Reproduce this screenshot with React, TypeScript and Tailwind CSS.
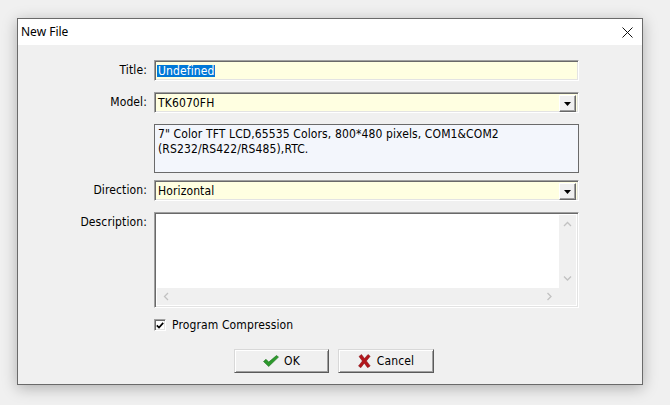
import React from "react";

const uiFont =
  "font-['DejaVu_Sans_Condensed','Liberation_Sans',sans-serif] text-[12px] tracking-[0.12px] text-black [font-variant-ligatures:none]";
const sunken =
  "border border-t-[#a0a0a0] border-l-[#a0a0a0] border-b-white border-r-white shadow-[inset_1px_1px_0_#696969,inset_-1px_-1px_0_#e3e3e3]";
const raised =
  "border border-t-[#d8d8d8] border-l-[#d8d8d8] border-b-[#5a5a5a] border-r-[#5a5a5a] bg-[#f0f0f0] shadow-[inset_1px_1px_0_#fff,inset_-1px_-1px_0_#a0a0a0]";

function DropButton() {
  return (
    <div className="absolute right-[2px] top-[2px] flex h-[17px] w-[17px] items-center justify-center border border-t-white border-l-white border-b-[#696969] border-r-[#696969] bg-[#f0f0f0] shadow-[inset_-1px_-1px_0_#a0a0a0]">
      <svg width="7" height="4" viewBox="0 0 7 4">
        <path d="M0 0h7L3.5 4z" fill="#000" />
      </svg>
    </div>
  );
}

function Chevron({ dir }: { dir: "up" | "down" | "left" | "right" }) {
  const d = {
    up: "M1 5l3.5-3.5L8 5",
    down: "M1 1.5l3.5 3.5L8 1.5",
    left: "M5 1L1.5 4.5 5 8",
    right: "M1.5 1L5 4.5 1.5 8",
  }[dir];
  const vertical = dir === "up" || dir === "down";
  return (
    <svg width={vertical ? 9 : 7} height={vertical ? 7 : 9} viewBox={vertical ? "0 0 9 7" : "0 0 7 9"}>
      <path d={d} fill="none" stroke="#c2c2c2" strokeWidth="1.3" />
    </svg>
  );
}

function Row({ label, children, top }: { label: string; children: React.ReactNode; top: string }) {
  return (
    <div className={`flex items-start ${top}`}>
      <div className="w-[129px] pt-[3px] text-right leading-[14px]">{label}</div>
      <div className="ml-[7px]">{children}</div>
    </div>
  );
}

export default function App() {
  return (
    <div className={`h-[405px] w-[670px] overflow-hidden bg-[#f0f0f0] pl-[17px] pt-[18px] ${uiFont}`}>
      <div className="flex h-[367px] w-[626px] flex-col border border-[#6a6a6a] bg-[#f0f0f0] shadow-[0_3px_14px_rgba(0,0,0,0.28)]">
        <div className="flex h-[26px] items-center justify-between bg-white pl-[3px] pr-[9px]">
          <span className="font-['Noto_Sans',sans-serif] text-[12px] tracking-normal text-black">New File</span>
          <svg width="11" height="11" viewBox="0 0 11 11">
            <path d="M0.5 0.5l10 10M10.5 0.5l-10 10" stroke="#111" strokeWidth="1" />
          </svg>
        </div>

        <div className="flex flex-col">
          <Row label="Title:" top="mt-[15px]">
            <div className={`flex h-[21px] w-[425px] items-center bg-[#ffffe1] pl-[2px] ${sunken}`}>
              <span className="bg-[#0078d7] px-[1px] leading-[12px] text-white">Undefined</span>
            </div>
          </Row>

          <Row label="Model:" top="mt-[11px]">
            <div className={`relative flex h-[21px] w-[425px] items-center bg-[#ffffe1] pl-[3px] ${sunken}`}>
              <span>TK6070FH</span>
              <DropButton />
            </div>
          </Row>

          <Row label="" top="mt-[11px]">
            <div className="h-[49px] w-[425px] border border-[#6a6a6a] bg-[#f3f6fc] px-[3px] pt-[2px] leading-[15px]">
              7" Color TFT LCD,65535 Colors, 800*480 pixels, COM1&amp;COM2
              <br />
              (RS232/RS422/RS485),RTC.
            </div>
          </Row>

          <Row label="Direction:" top="mt-[7px]">
            <div className={`relative flex h-[21px] w-[425px] items-center bg-[#ffffe1] pl-[3px] ${sunken}`}>
              <span>Horizontal</span>
              <DropButton />
            </div>
          </Row>

          <Row label="Description:" top="mt-[11px]">
            <div className={`grid h-[96px] w-[425px] grid-cols-[1fr_17px] grid-rows-[1fr_17px] bg-white p-[2px] ${sunken}`}>
              <div className="bg-white" />
              <div className="flex flex-col items-center justify-between bg-[#f0f0f0] py-[6px]">
                <Chevron dir="up" />
                <Chevron dir="down" />
              </div>
              <div className="flex items-center justify-between bg-[#f0f0f0] px-[6px]">
                <Chevron dir="left" />
                <Chevron dir="right" />
              </div>
              <div className="bg-[#f0f0f0]" />
            </div>
          </Row>

          <div className="ml-[136px] mt-[8px] flex items-center gap-[6px]">
            <div className={`flex h-[12px] w-[12px] items-center justify-center bg-white ${sunken}`}>
              <svg width="8" height="7" viewBox="0 0 8 7">
                <path d="M0.8 3.3l2.2 2.2 4.2-4.6" fill="none" stroke="#000" strokeWidth="1.7" />
              </svg>
            </div>
            <span>Program Compression</span>
          </div>

          <div className="ml-[216px] mt-[15px] flex gap-[9px]">
            <button type="button" className={`flex h-[24px] w-[95px] items-center justify-center gap-[5px] ${raised}`}>
              <svg width="16" height="12" viewBox="0 0 16 12">
                <path d="M0.5 6.5l2.5-2.2 2.7 2.8L13.5 0.5l2 1.6-9.8 9.4z" fill="#2d9a2d" stroke="#1d6e1d" strokeWidth="0.6" />
              </svg>
              <span>OK</span>
            </button>
            <button type="button" className={`flex h-[24px] w-[96px] items-center justify-center gap-[6px] ${raised}`}>
              <svg width="13" height="14" viewBox="0 0 13 14">
                <path d="M1 2.5l2.5-2 3 4 3.5-4 2.2 1.8-3.8 4.6 3.8 5-2.6 1.8-3.3-4.5-3.5 4.5-2.3-1.7 3.9-5z" fill="#b3161c" stroke="#7e0e12" strokeWidth="0.5" />
              </svg>
              <span>Cancel</span>
            </button>
          </div>
        </div>
      </div>
    </div>
  );
}
